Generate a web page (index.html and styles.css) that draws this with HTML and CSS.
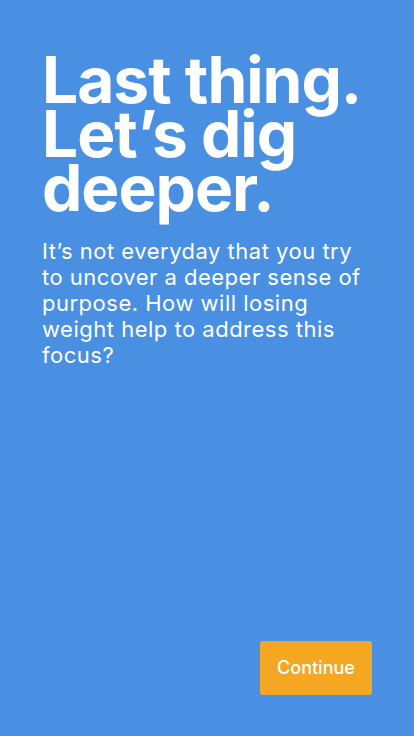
FILE: index.html
```html
<!DOCTYPE html>
<html lang="en">
<head>
<meta charset="utf-8">
<meta name="viewport" content="width=device-width, initial-scale=1">
<title>Last thing</title>
<link rel="stylesheet" href="styles.css">
</head>
<body>
<main class="screen">
  <section class="content">
    <h1 class="title">Last thing. Let’s dig deeper.</h1>
    <p class="lead">It’s not everyday that you try to uncover a deeper sense of purpose. How will losing weight help to address this focus?</p>
  </section>
  <footer class="actions">
    <button class="continue" type="button">Continue</button>
  </footer>
</main>
</body>
</html>
```
FILE: styles.css
```css
* { box-sizing: border-box; }
html, body { margin: 0; padding: 0; height: 100%; }
body {
  background: #4A90E2;
  font-family: Inter, "Noto Sans", sans-serif;
  color: #fff;
}
.screen {
  height: 736px;
  display: flex;
  flex-direction: column;
  justify-content: space-between;
  padding: 53px 42px 41px 42px;
}
.title {
  margin: 0;
  font-size: 64px;
  font-weight: 700;
  line-height: 54px;
  letter-spacing: -1px;
  width: 320px;
}
.lead {
  margin: 23px 0 0 0;
  font-size: 22px;
  line-height: 26px;
  font-weight: 400;
  letter-spacing: 0.5px;
  width: 325px;
}
.actions {
  display: flex;
  justify-content: flex-end;
}
.continue {
  width: 112px;
  height: 54px;
  border: none;
  border-radius: 3px;
  background: #F5A623;
  color: #fff;
  font-family: Inter, "Noto Sans", sans-serif;
  font-size: 18px;
  font-weight: 500;
  padding: 0 0 2px 0;
}
```
